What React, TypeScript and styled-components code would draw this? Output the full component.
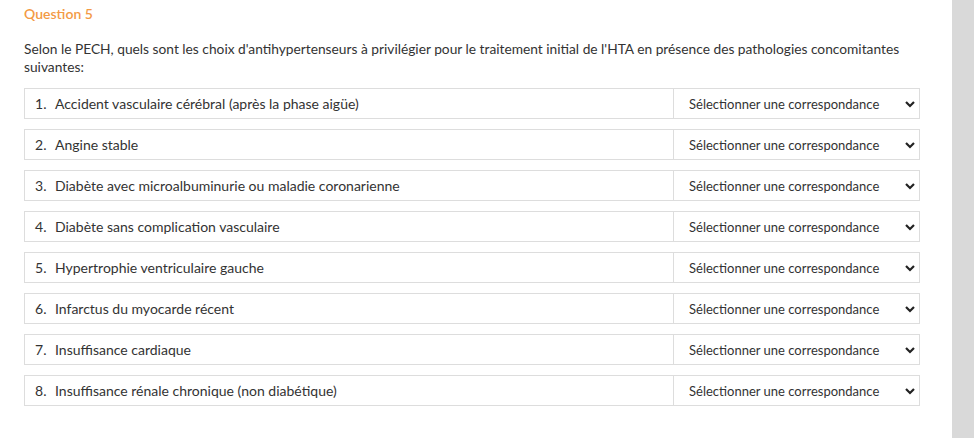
import React from 'react'
import styled, { createGlobalStyle } from 'styled-components'

const GlobalStyle = createGlobalStyle`
  html, body {
    margin: 0;
    padding: 0;
    background: #fff;
  }
  body {
    font-family: Lato, "Open Sans", sans-serif;
    color: #333;
  }
`;

const Page = styled.div`
  display: flex;
  height: 438px;
  overflow: hidden;
`;

const Main = styled.div`
  flex: 1;
  padding: 4px 32px 0 24px;
`;

const Sidebar = styled.div`
  width: 22px;
  background: #d9d9d9;
`;

const Title = styled.h3`
  margin: 0;
  font-size: 14px;
  font-weight: 600;
  line-height: 20px;
  color: #f39a45;
`;

const Prompt = styled.p`
  margin: 16px 0 12px;
  font-size: 13.75px;
  line-height: 18px;
  color: #333;
`;

const List = styled.ol`
  margin: 0;
  padding: 0;
  list-style: none;
  display: flex;
  flex-direction: column;
  gap: 10px;
`;

const Row = styled.li`
  display: flex;
  height: 31px;
  box-sizing: border-box;
  border: 1px solid #ddd;
  font-size: 14px;
`;

const Label = styled.div`
  flex: 1;
  display: flex;
  align-items: center;
  padding-left: 10px;
`;

const Num = styled.span`
  width: 20px;
`;

const SelectWrap = styled.div`
  position: relative;
  width: 245px;
  border-left: 1px solid #ddd;
`;

const Select = styled.select`
  appearance: none;
  width: 100%;
  height: 100%;
  border: none;
  background: transparent;
  font-family: inherit;
  font-size: 13px;
  color: #333;
  padding: 0 0 0 15px;
  outline: none;
`;

const Chevron = styled.svg`
  position: absolute;
  right: 3px;
  top: 50%;
  transform: translateY(-50%);
  pointer-events: none;
`;

const items = [
  'Accident vasculaire cérébral (après la phase aigüe)',
  'Angine stable',
  'Diabète avec microalbuminurie ou maladie coronarienne',
  'Diabète sans complication vasculaire',
  'Hypertrophie ventriculaire gauche',
  'Infarctus du myocarde récent',
  'Insuffisance cardiaque',
  'Insuffisance rénale chronique (non diabétique)',
];

const App: React.FC = () => (
  <>
    <GlobalStyle />
    <Page>
      <Main>
        <Title>Question 5</Title>
        <Prompt>
          Selon le PECH, quels sont les choix d'antihypertenseurs à privilégier pour le traitement initial de l'HTA en présence des pathologies concomitantes suivantes:
        </Prompt>
        <List>
          {items.map((item, i) => (
            <Row key={item}>
              <Label>
                <Num>{i + 1}.</Num>
                {item}
              </Label>
              <SelectWrap>
                <Select defaultValue="">
                  <option value="">Sélectionner une correspondance</option>
                </Select>
                <Chevron width="12" height="12" viewBox="0 0 12 12">
                  <path d="M2 4 L6 8 L10 4" fill="none" stroke="#222" strokeWidth="2.2" />
                </Chevron>
              </SelectWrap>
            </Row>
          ))}
        </List>
      </Main>
      <Sidebar />
    </Page>
  </>
);

export default App;
